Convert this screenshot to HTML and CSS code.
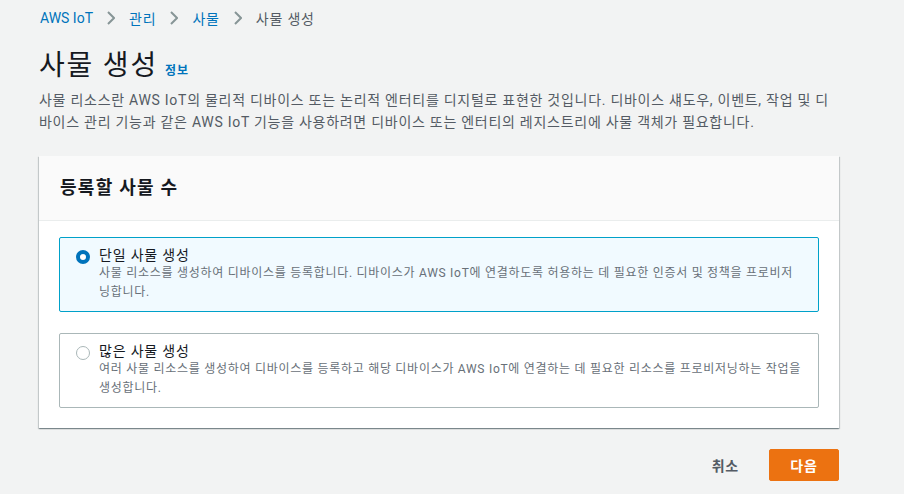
FILE: index.html
```html
<!DOCTYPE html>
<html lang="ko">
<head>
<meta charset="utf-8">
<link rel="stylesheet" href="styles.css">
</head>
<body>
<div class="page">
  <nav class="crumbs">
    <a class="crumb-link latin">AWS IoT</a>
    <span class="sep"><svg width="8" height="14" viewBox="0 0 8 14"><path d="M1 1l6 6-6 6" fill="none" stroke="#879596" stroke-width="2"/></svg></span>
    <a class="crumb-link">관리</a>
    <span class="sep"><svg width="8" height="14" viewBox="0 0 8 14"><path d="M1 1l6 6-6 6" fill="none" stroke="#879596" stroke-width="2"/></svg></span>
    <a class="crumb-link">사물</a>
    <span class="sep"><svg width="8" height="14" viewBox="0 0 8 14"><path d="M1 1l6 6-6 6" fill="none" stroke="#879596" stroke-width="2"/></svg></span>
    <span class="crumb-current">사물 생성</span>
  </nav>
  <header class="head">
    <h1 class="title">사물 생성</h1>
    <a class="info">정보</a>
  </header>
  <p class="desc">사물 리소스란 AWS IoT의 물리적 디바이스 또는 논리적 엔터티를 디지털로 표현한 것입니다. 디바이스 섀도우, 이벤트, 작업 및 디바이스 관리 기능과 같은 AWS IoT 기능을 사용하려면 디바이스 또는 엔터티의 레지스트리에 사물 객체가 필요합니다.</p>
  <section class="card">
    <div class="card-head">등록할 사물 수</div>
    <div class="card-body">
      <label class="option selected">
        <span class="radio on"></span>
        <span class="opt-text">
          <span class="opt-title">단일 사물 생성</span>
          <span class="opt-desc">사물 리소스를 생성하여 디바이스를 등록합니다. 디바이스가 AWS IoT에 연결하도록 허용하는 데 필요한 인증서 및 정책을 프로비저닝합니다.</span>
        </span>
      </label>
      <label class="option">
        <span class="radio"></span>
        <span class="opt-text">
          <span class="opt-title">많은 사물 생성</span>
          <span class="opt-desc">여러 사물 리소스를 생성하여 디바이스를 등록하고 해당 디바이스가 AWS IoT에 연결하는 데 필요한 리소스를 프로비저닝하는 작업을 생성합니다.</span>
        </span>
      </label>
    </div>
  </section>
  <div class="actions">
    <button class="btn-link">취소</button>
    <button class="btn-primary">다음</button>
  </div>
</div>
</body>
</html>
```
FILE: styles.css
```css
html, body {
  margin: 0;
  padding: 0;
  background: #f2f3f3;
}
body {
  font-family: Roboto, "Noto Sans CJK KR", sans-serif;
  color: #16191f;
  width: 904px;
  height: 494px;
  overflow: hidden;
  letter-spacing: 0.05em;
}
.latin {
  letter-spacing: 0;
}
.page {
  padding: 8px 65px 0 39px;
}
.crumbs {
  display: flex;
  align-items: center;
  height: 20px;
  font-size: 14px;
  padding-left: 1px;
}
.crumb-link {
  color: #0073bb;
}
.crumb-current {
  color: #545b64;
}
.sep {
  display: flex;
  margin: 0 14px 0 14px;
}
.head {
  display: flex;
  align-items: baseline;
  margin-top: 19px;
}
.title {
  margin: 0;
  font-size: 28px;
  font-weight: 400;
  line-height: 38px;
  letter-spacing: 0.064em;
  color: #16191f;
}
.info {
  font-size: 12px;
  font-weight: 700;
  color: #0073bb;
  margin-left: 7px;
  letter-spacing: 0.08em;
}
.desc {
  margin: 4px 0 0;
  font-size: 14px;
  line-height: 22px;
  color: #545b64;
  width: 800px;
  letter-spacing: 0.052em;
}
.card {
  margin-top: 23px;
  width: 800px;
  background: #fff;
  box-shadow: 0 1px 1px 0 rgba(0,28,36,.3), 1px 1px 1px 0 rgba(0,28,36,.15), -1px 1px 1px 0 rgba(0,28,36,.15);
}
.card-head {
  background: #fafafa;
  border-bottom: 1px solid #eaeded;
  height: 65px;
  box-sizing: border-box;
  padding: 19px 21px 0;
  font-size: 18px;
  font-weight: 700;
  line-height: 26px;
  letter-spacing: 0.07em;
}
.card-body {
  padding: 16px 20px 20px;
  display: flex;
  flex-direction: column;
  gap: 21px;
}
.option {
  display: flex;
  border: 1px solid #aab7b8;
  border-radius: 2px;
  padding: 9px 16px 9px 16px;
  height: 75px;
  box-sizing: border-box;
}
.option.selected {
  border-color: #00a1c9;
  background: #f1faff;
}
.radio {
  width: 14px;
  height: 14px;
  border: 1px solid #aab7b8;
  border-radius: 50%;
  box-sizing: border-box;
  background: #fff;
  margin: 3px 9px 0 0;
  flex: none;
}
.radio.on {
  border: 4px solid #0073bb;
}
.opt-text {
  display: flex;
  flex-direction: column;
}
.opt-title {
  font-size: 14px;
  line-height: 17px;
}
.opt-desc {
  font-size: 12px;
  line-height: 19px;
  color: #687078;
  letter-spacing: 0.06em;
}
.actions {
  width: 800px;
  display: flex;
  justify-content: flex-end;
  align-items: center;
  margin-top: 21px;
  gap: 30px;
}
.btn-link {
  border: none;
  background: none;
  font: inherit;
  letter-spacing: inherit;
  font-size: 14px;
  font-weight: 700;
  color: #545b64;
  padding: 0;
}
.btn-primary {
  border: 1px solid #ec7211;
  background: #ec7211;
  color: #fff;
  font: inherit;
  letter-spacing: inherit;
  font-size: 14px;
  font-weight: 700;
  border-radius: 2px;
  width: 70px;
  height: 32px;
  padding: 0;
}
```
